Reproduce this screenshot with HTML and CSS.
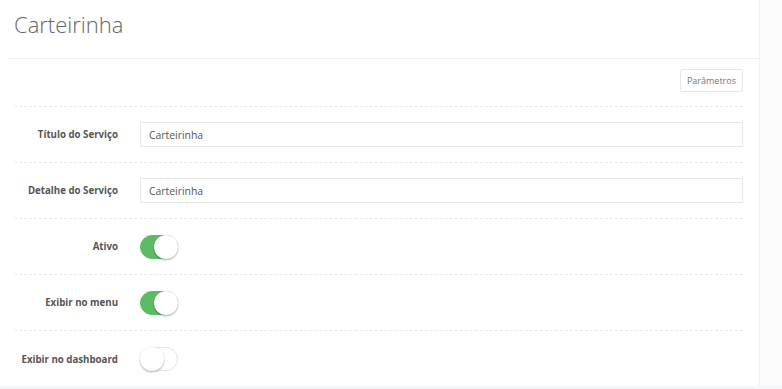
FILE: index.html
```html
<!DOCTYPE html>
<html lang="pt-BR">
<head>
    <meta charset="utf-8">
    <title>Carteirinha</title>
    <link rel="stylesheet" href="styles.css">
</head>
<body>
    <div class="pagina">
        <section class="painel">
            <header class="painel-topo">
                <h1>Carteirinha</h1>
            </header>
            <div class="painel-corpo">
                <div class="acoes">
                    <button class="btn-param">Parâmetros</button>
                </div>
                <div class="linha">
                    <label>Título do Serviço</label>
                    <input type="text" value="Carteirinha">
                </div>
                <div class="linha">
                    <label>Detalhe do Serviço</label>
                    <input type="text" value="Carteirinha">
                </div>
                <div class="linha">
                    <label>Ativo</label>
                    <span class="chave ligada"><span class="bola"></span></span>
                </div>
                <div class="linha">
                    <label>Exibir no menu</label>
                    <span class="chave ligada"><span class="bola"></span></span>
                </div>
                <div class="linha ultima">
                    <label>Exibir no dashboard</label>
                    <span class="chave"><span class="bola"></span></span>
                </div>
            </div>
        </section>
    </div>
</body>
</html>
```

FILE: styles.css
```css
* {
    box-sizing: border-box;
}

body {
    margin: 0;
    background-color: #f5f6f8;
    font-family: 'Open Sans', sans-serif;
    color: #555;
}

.pagina {
    background-color: #fcfcfc;
    height: 386px;
}

.painel {
    width: 760px;
    height: 386px;
    background-color: #ffffff;
    border-right: 1px solid #f0f0f0;
}

.painel-topo {
    margin-left: 7px;
    height: 59px;
    border-bottom: 1px solid #eeeeee;
    padding: 9px 0 0 7px;
}

h1 {
    margin: 0;
    font-size: 22px;
    font-weight: 300;
    color: #666;
}

.painel-corpo {
    padding: 0 16px 0 14px;
}

.acoes {
    display: flex;
    justify-content: flex-end;
    padding: 10px 0 14px 0;
    border-bottom: 1px dashed #e8e8e8;
}

.btn-param {
    font-family: 'Open Sans', sans-serif;
    font-size: 9px;
    color: #777;
    background-color: #fff;
    border: 1px solid #e6e6e6;
    border-radius: 2px;
    height: 23px;
    padding: 0 6px;
}

.linha {
    display: flex;
    align-items: center;
    height: 56px;
    border-bottom: 1px dashed #e8e8e8;
}

.linha.ultima {
    border-bottom: none;
}

label {
    width: 104px;
    text-align: right;
    font-size: 9.7px;
    font-weight: bold;
    color: #555;
    margin-right: 22px;
    flex-shrink: 0;
    white-space: nowrap;
}

input {
    flex: 1;
    height: 25px;
    border: 1px solid #e8e8e8;
    border-radius: 1px;
    padding: 0 8px;
    font-family: 'Open Sans', sans-serif;
    font-size: 10.4px;
    color: #555;
    background-color: #fff;
}

.chave {
    position: relative;
    display: inline-block;
    width: 38px;
    height: 24px;
    border-radius: 12px;
    border: 1px solid #e6e6e6;
    background-color: #fff;
}

.chave.ligada {
    background-color: #5cbc63;
    border-color: #5cbc63;
}

.bola {
    position: absolute;
    top: -1px;
    left: -1px;
    width: 24px;
    height: 24px;
    border-radius: 50%;
    background-color: #fff;
    box-shadow: 0 1px 2px rgba(0, 0, 0, 0.35);
}

.chave.ligada .bola {
    left: 13px;
}
```
